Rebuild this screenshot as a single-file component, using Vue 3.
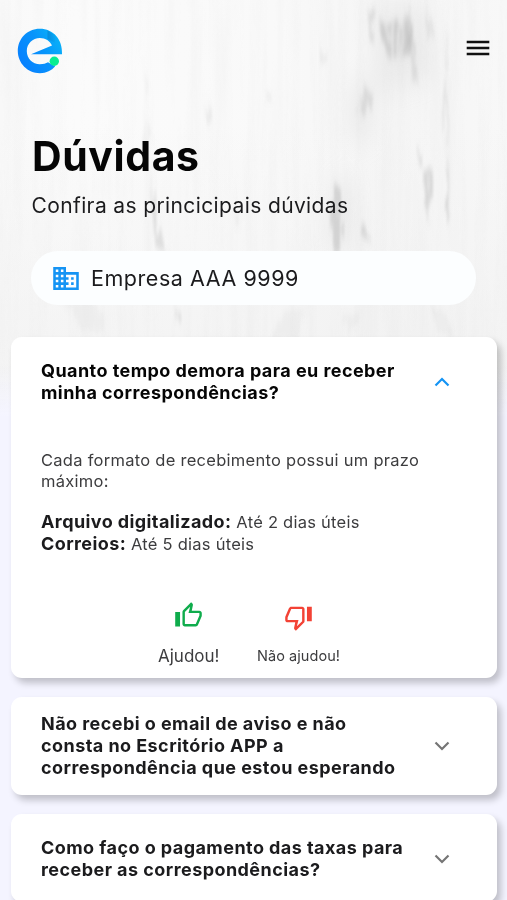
<script setup>
import { ref } from 'vue'

const company = 'Empresa AAA 9999'
const openId = ref(1)
const faqs = [
  { id: 1, lines: ['Quanto tempo demora para eu receber', 'minha correspondências?'] },
  { id: 2, lines: ['Não recebi o email de aviso e não', 'consta no Escritório APP a', 'correspondência que estou esperando'] },
  { id: 3, lines: ['Como faço o pagamento das taxas para', 'receber as correspondências?'] },
]
const toggle = (id) => {
  openId.value = openId.value === id ? null : id
}
</script>

<template>
  <div class="screen">
    <svg class="backdrop" viewBox="0 0 507 420" aria-hidden="true">
      <defs>
        <linearGradient id="paint" x1="0" y1="0" x2="1" y2="0">
          <stop offset="0" stop-color="#f9f9f9" />
          <stop offset=".15" stop-color="#fbfbfb" />
          <stop offset=".55" stop-color="#f9f9f9" />
          <stop offset=".78" stop-color="#f5f5f5" />
          <stop offset="1" stop-color="#f8f8f8" />
        </linearGradient>
        <linearGradient id="lower" x1="0" y1="0" x2="0" y2="1">
          <stop offset=".3" stop-color="#f1f1f1" stop-opacity="0" />
          <stop offset=".8" stop-color="#f1f1f1" stop-opacity=".65" />
        </linearGradient>
        <linearGradient id="fade" x1="0" y1="0" x2="0" y2="1">
          <stop offset=".87" stop-color="#f4f4ff" stop-opacity="0" />
          <stop offset=".99" stop-color="#f4f4ff" />
        </linearGradient>
        <filter id="grain" x="0" y="0" width="100%" height="100%">
          <feTurbulence type="fractalNoise" baseFrequency=".09 .005" numOctaves="3" seed="8" />
          <feColorMatrix values="0 0 0 0 .6  0 0 0 0 .6  0 0 0 0 .6  .55 0 0 0 -.22" />
        </filter>
        <filter id="rough" x="-20%" y="-20%" width="140%" height="140%">
          <feTurbulence type="fractalNoise" baseFrequency=".2 .025" numOctaves="3" seed="4" result="n" />
          <feDisplacementMap in="SourceGraphic" in2="n" scale="14" xChannelSelector="R" yChannelSelector="G" />
          <feGaussianBlur stdDeviation="1 3.500" />
        </filter>
        <filter id="soft" x="-50%" y="-20%" width="200%" height="140%">
          <feGaussianBlur stdDeviation="9 14" />
        </filter>
      </defs>
      <rect width="507" height="420" fill="url(#paint)" />
      <rect width="507" height="420" fill="url(#lower)" />
      <rect width="507" height="420" filter="url(#grain)" opacity=".36" />
      <g filter="url(#soft)" fill="#bbb" opacity=".16">
        <path d="M370 5h55l10 70-60 20zM330 180h25v70h-30zM350 80h25v60h-30z" />
      </g>
      <g filter="url(#rough)" fill="#a8a8a8">
        <path d="M370 10l5 0-2 35-4-8z" opacity=".28" />
        <path d="M381 18l7 4 2 40-5-4zM391 24l7-2 2 38-6-5zM402 20l7-4 3 34-6 4z" opacity=".3" />
        <path d="M380 24h32l2 24-10 8-20-2z" opacity=".16" />
        <path d="M408 0l5 30 5 50-4 4-5-34z" opacity=".25" />
        <path d="M426 0l6 28 2 14-5-6zM447 20l2 100-4 30z" opacity=".18" />
        <path d="M363 85l7 8-4 24-6-6z" opacity=".28" />
        <path d="M333 185l9 4-2 28 3 14-5 22-6-6-2-28z" opacity=".38" />
        <path d="M321 40l5 20-4-2zM266 90l4 10-2 3zM207 105l6 12-3 8z" opacity=".18" />
        <path d="M417 145l4 20-3 6zM427 166l5 12-3 48-4-20zM446 155l3 60-3 6z" opacity=".36" />
        <path d="M364 224l6 14-2 6-5-8z" opacity=".35" />
        <path d="M152 165l5 50 4 22 5 18-7-6-5-16z" opacity=".3" />
        <path d="M145 50l4 100-5 10zM235 175l4 55-3-4z" opacity=".1" />
        <path d="M176 306l5 10-2 6z" opacity=".35" />
        <path d="M284 310h22l-10 30h-24zM342 315h20l-15 20zM430 308l14 0 8 30-12-5zM60 300h40l5 35-20-4z" opacity=".08" />
      </g>
      <rect width="507" height="420" fill="url(#fade)" />
    </svg>

    <header class="topbar">
      <svg class="logo" viewBox="0 0 46 46" role="img" aria-label="e">
        <defs>
          <linearGradient id="brand" x1="0" y1=".8" x2="1" y2=".2">
            <stop offset="0" stop-color="#087eff" />
            <stop offset=".55" stop-color="#0894fb" />
            <stop offset="1" stop-color="#09b5f8" />
          </linearGradient>
          <linearGradient id="fold" x1="0" y1="0" x2="1" y2="0">
            <stop offset="0" stop-color="#0783d2" stop-opacity=".75" />
            <stop offset="1" stop-color="#0783d2" stop-opacity="0" />
          </linearGradient>
        </defs>
        <path fill="url(#brand)" d="M45 26.300C45.800 11.500 36.300.8 22.800.8 10.200.8.8 10.800.8 23s9.800 22.200 22.100 22.200c6.600 0 11.600-2.600 15.300-6.900L31 34.200c-2.100 1.200-4.600 2-8.100 2-7.400 0-13.100-5.700-13.100-13.300C9.800 15.500 15.600 9.900 22.900 9.900c5.500 0 10.200 3 12.100 7.700L14 26.300z" />
        <path fill="url(#fold)" d="M30.500 2.200l9 6.300-2 6-7-3.500z" />
        <circle cx="37.300" cy="33.200" r="4.700" fill="#08ed91" />
      </svg>
      <button class="menu" aria-label="Menu">
        <svg viewBox="0 0 24 16"><path d="M.7 1.900h22.600M.7 8h22.600M.7 14.100h22.600" stroke="#111" stroke-width="2.500" /></svg>
      </button>
    </header>

    <section class="intro">
      <h1>Dúvidas</h1>
      <p>Confira as princicipais dúvidas</p>
      <div class="company">
        <svg viewBox="2 3 20 18"><path fill="#1594f4" d="M12 7V3H2v18h20V7H12zM6 19H4v-2h2v2zm0-4H4v-2h2v2zm0-4H4V9h2v2zm0-4H4V5h2v2zm4 12H8v-2h2v2zm0-4H8v-2h2v2zm0-4H8V9h2v2zm0-4H8V5h2v2zm10 12h-8v-2h2v-2h-2v-2h2v-2h-2V9h8v10zm-2-8h-2v2h2v-2zm0 4h-2v2h2v-2z" /></svg>
        <span>{{ company }}</span>
      </div>
    </section>

    <main class="list">
      <article v-for="faq in faqs" :key="faq.id" class="card" :class="{ open: openId === faq.id, tall: faq.lines.length > 2 }">
        <div class="question" @click="toggle(faq.id)">
          <h2><span v-for="line in faq.lines" :key="line">{{ line }}</span></h2>
          <svg class="chevron" viewBox="0 0 16 10"><path d="M1.500 1.500L8 8l6.500-6.500" fill="none" stroke="currentColor" stroke-width="2.200" /></svg>
        </div>
        <div v-if="openId === faq.id" class="answer">
          <p class="lead">Cada formato de recebimento possui um prazo<br />máximo:</p>
          <p class="terms"><b>Arquivo digitalizado:</b> <span>Até 2 dias úteis</span><br /><b>Correios:</b> <span>Até 5 dias úteis</span></p>
          <div class="votes">
            <div class="vote yes">
              <svg viewBox="0 0 24 24"><path fill="#0fac4c" d="M9 21h9c.83 0 1.540-.5 1.840-1.220l3.020-7.050c.09-.23.14-.47.14-.73v-2c0-1.100-.9-2-2-2h-6.310l.95-4.570.03-.32c0-.41-.17-.79-.44-1.060L14.170 1 7.580 7.590C7.220 7.950 7 8.450 7 9v10c0 1.100.9 2 2 2zM9 9l4.340-4.340L12 10h9v2l-3 7H9V9zM1 9h4v12H1z" /></svg>
              <span>Ajudou!</span>
            </div>
            <div class="vote no">
              <svg viewBox="0 0 24 24"><path fill="#f34235" d="M15 3H6c-.83 0-1.540.5-1.840 1.220l-3.020 7.050c-.09.23-.14.47-.14.73v2c0 1.100.9 2 2 2h6.310l-.95 4.570-.03.32c0 .41.17.79.44 1.060L9.830 23l6.590-6.590c.36-.36.58-.86.58-1.410V5c0-1.100-.9-2-2-2zm0 12l-4.340 4.340L12 14H3v-2l3-7h9v10zm4-12h4v12h-4z" /></svg>
              <span>Não ajudou!</span>
            </div>
          </div>
        </div>
      </article>
    </main>
  </div>
</template>

<style>
body { background: #f4f4ff; overflow: hidden; }
</style>

<style scoped>
.screen { position: relative; box-sizing: border-box; height: 900px; overflow: hidden; font-family: Inter, "Liberation Sans", sans-serif; color: #1b1b1d; background: #f4f4ff; }
.backdrop { position: absolute; top: 0; left: 0; width: 100%; height: 420px; }
.topbar, .intro, .list { position: relative; }
.topbar { display: flex; justify-content: space-between; align-items: flex-start; padding: 28px 17px 0; height: 46px; }
.logo { width: 46px; height: 46px; }
.menu { display: flex; margin: 12px 0 0; padding: 0; border: 0; background: none; }
.menu svg { width: 24px; height: 16px; }
.intro { padding: 57px 31px 0; white-space: nowrap; }
h1 { margin: 0; padding-left: 1px; font-size: 41px; line-height: 50px; font-weight: 700; color: #050505; letter-spacing: .6px; }
.intro p { margin: 12px 0 0; padding-left: .5px; font-size: 21px; line-height: 26px; letter-spacing: .38px; }
.company { display: flex; align-items: center; gap: 12px; height: 54px; margin-top: 32px; width: 445px; box-sizing: border-box; padding-left: 22px; border-radius: 27px; background: #fcfeff; font-size: 21.500px; letter-spacing: .55px; }
.company svg { width: 26px; height: 23px; }
.list { display: flex; flex-direction: column; gap: 19px; padding: 32px 10px 0 11px; }
.card { box-sizing: border-box; flex: none; height: 88px; padding: 23px 30px 0 30px; border-radius: 11px; background: #fff; box-shadow: 4px 5px 7px rgba(0, 0, 0, .22); white-space: nowrap; }
.card.tall { height: 98px; padding-top: 16px; }
.card.open { height: 341px; }
.question { display: flex; align-items: center; justify-content: space-between; }
h2 { margin: 0; font-size: 18px; line-height: 22px; font-weight: 700; letter-spacing: .44px; }
h2 span { display: block; }
.open h2 { color: #050505; }
.chevron { width: 16px; height: 10px; margin-right: 17px; color: #757575; }
.open .chevron { color: #1594f4; transform: rotate(180deg); }
.answer { color: #3c3c3e; }
.lead { margin: 46px 0 0; font-size: 16.500px; line-height: 21px; letter-spacing: .27px; }
.terms { margin: 19px 0 0; font-size: 16.500px; line-height: 22px; letter-spacing: .25px; }
.terms b { font-size: 18px; color: #1b1b1d; letter-spacing: .4px; }
.votes { display: flex; padding-left: 117px; gap: 37.500px; margin-top: 46px; }
.vote { display: flex; flex-direction: column; align-items: center; }
.vote svg { width: 29px; height: 29px; }
.vote span { line-height: 22px; margin-top: 15px; }
.yes span { font-size: 17px; }
.no svg { margin-top: 2px; }
.no span { font-size: 14.500px; margin-top: 13px; letter-spacing: .06px; }
</style>
